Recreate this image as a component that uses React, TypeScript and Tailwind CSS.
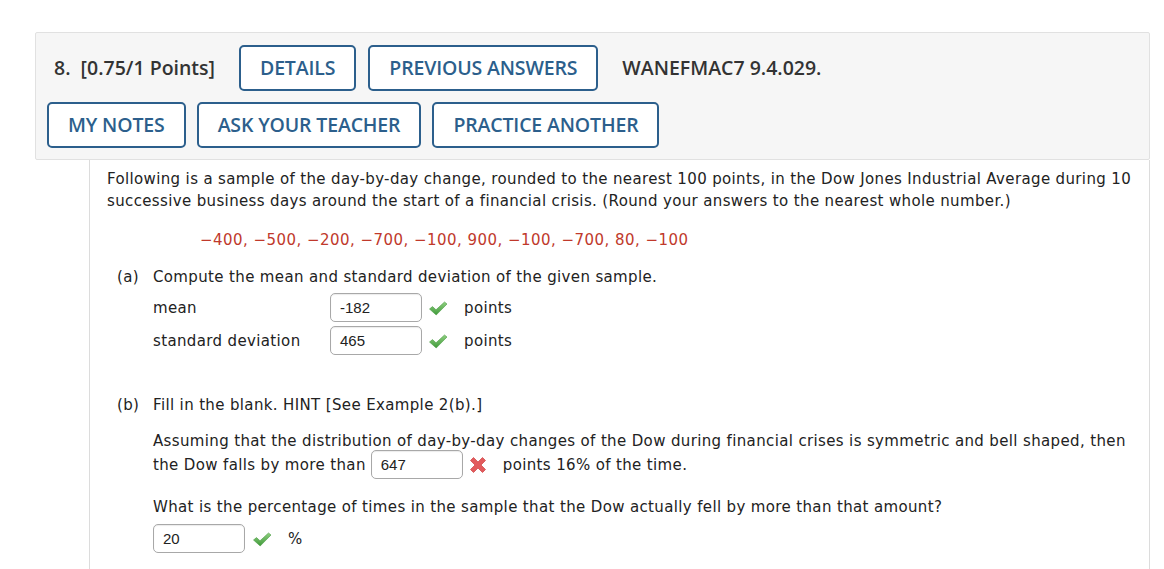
import React from "react";

const HEAD = { fontFamily: '"Open Sans", "Liberation Sans", sans-serif' };
const FIELD = { fontFamily: '"Liberation Sans", Arial, sans-serif' };

function ActionButton({ label }: { label: string }) {
  return (
    <button
      type="button"
      style={HEAD}
      className="h-[46px] rounded-[5px] border-2 border-[#2c5f8c] bg-white px-[19px] text-[19.5px] font-semibold tracking-[-0.15px] text-[#2c5f8c]"
    >
      {label}
    </button>
  );
}

function Check() {
  return (
    <svg width="20" height="18" viewBox="0 0 20 18" className="shrink-0">
      <defs>
        <linearGradient id="ck" x1="0" y1="0" x2="0" y2="1">
          <stop offset="0" stopColor="#8fcf7f" />
          <stop offset="1" stopColor="#3f9a3a" />
        </linearGradient>
      </defs>
      <path
        d="M1.5 10 L4.5 7.6 L8 10.8 L16.5 3 L19 5 L8.2 16 Z"
        fill="url(#ck)"
        stroke="#4c9c45"
        strokeWidth="0.6"
        strokeLinejoin="round"
      />
    </svg>
  );
}

function Cross() {
  return (
    <svg width="20" height="20" viewBox="0 0 20 20" className="shrink-0">
      <path
        d="M2.5 5.5 L5.5 2.5 L10 7 L14.5 2.5 L17.5 5.5 L13 10 L17.5 14.5 L14.5 17.5 L10 13 L5.5 17.5 L2.5 14.5 L7 10 Z"
        fill="#e25a5c"
        stroke="#d24b4d"
        strokeWidth="0.8"
        strokeLinejoin="round"
      />
    </svg>
  );
}

function Field({ value }: { value: string }) {
  return (
    <span
      style={FIELD}
      className="inline-flex h-[29px] w-[92px] shrink-0 items-center rounded-[5px] border border-[#a8a8a8] bg-white pl-[9px] text-[15px] tracking-normal text-[#222] shadow-[inset_0_1px_1px_rgba(0,0,0,0.08)]"
    >
      {value}
    </span>
  );
}

export default function App() {
  return (
    <div className="min-h-[569px] bg-white pl-[35px] pr-[14px] pt-[32px]">
      <div className="rounded-[2px] border border-[#e1e1e1] bg-[#f6f6f6] px-[11px] pb-[11px] pt-[12px]">
        <div className="flex items-center">
          <span style={HEAD} className="ml-[7px] mr-[24px] text-[19.5px] font-semibold text-[#333]">
            8.&nbsp; [0.75/1 Points]
          </span>
          <div className="flex gap-[12px]">
            <ActionButton label="DETAILS" />
            <ActionButton label="PREVIOUS ANSWERS" />
          </div>
          <span style={HEAD} className="ml-[24px] text-[19.5px] font-semibold text-[#333]">
            WANEFMAC7 9.4.029.
          </span>
        </div>
        <div className="mt-[11px] flex gap-[11px]">
          <ActionButton label="MY NOTES" />
          <ActionButton label="ASK YOUR TEACHER" />
          <ActionButton label="PRACTICE ANOTHER" />
        </div>
      </div>

      <div className="ml-[54px] min-h-[409px] border-x border-[#dcdcdc] pl-[17px] pr-[14px] pt-[8px] font-['DejaVu_Sans',Verdana,sans-serif] text-[15px] leading-[22px] tracking-[0.36px] text-[#222]">
        <p>
          Following is a sample of the day-by-day change, rounded to the nearest 100 points, in the Dow Jones
          Industrial Average during 10 successive business days around the start of a financial crisis. (Round
          your answers to the nearest whole number.)
        </p>
        <p className="mt-[17px] pl-[93px] tracking-[0.46px] text-[#c0392b]">
          −400, −500, −200, −700, −100, 900, −100, −700, 80, −100
        </p>

        <div className="mt-[15px] flex">
          <span className="w-[46px] pl-[10px]">(a)</span>
          <div className="flex-1">
            <p>Compute the mean and standard deviation of the given sample.</p>
            <div className="mt-[5px] flex items-center">
              <span className="w-[177px]">mean</span>
              <Field value="-182" />
              <span className="ml-[6px]"><Check /></span>
              <span className="ml-[16px]">points</span>
            </div>
            <div className="mt-[4px] flex items-center">
              <span className="w-[177px]">standard deviation</span>
              <Field value="465" />
              <span className="ml-[6px]"><Check /></span>
              <span className="ml-[16px]">points</span>
            </div>
          </div>
        </div>

        <div className="mt-[39px] flex">
          <span className="w-[46px] pl-[10px]">(b)</span>
          <div className="flex-1">
            <p>Fill in the blank. HINT [See Example 2(b).]</p>
            <p className="mt-[14px]">
              Assuming that the distribution of day-by-day changes of the Dow during financial crises is symmetric and
              bell shaped, then
            </p>
            <div className="mt-[-2px] flex items-center">
              <span>the Dow falls by more than</span>
              <span className="ml-[5px]"><Field value="647" /></span>
              <span className="ml-[5px]"><Cross /></span>
              <span className="ml-[15px]">points 16% of the time.</span>
            </div>
            <p className="mt-[17px]">
              What is the percentage of times in the sample that the Dow actually fell by more than that amount?
            </p>
            <div className="mt-[6px] flex items-center">
              <Field value="20" />
              <span className="ml-[7px]"><Check /></span>
              <span className="ml-[16px]">%</span>
            </div>
          </div>
        </div>
      </div>
    </div>
  );
}
